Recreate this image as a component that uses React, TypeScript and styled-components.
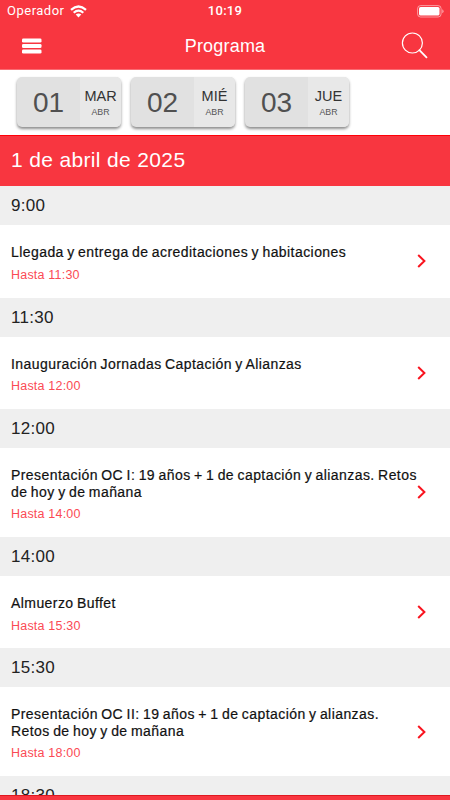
import React from 'react';
import styled, { createGlobalStyle } from 'styled-components';

const red = '#f83640';

const GlobalStyle = createGlobalStyle`
  * { box-sizing: border-box; }
  body { margin: 0; background: #fff; overflow: hidden; font-family: "Liberation Sans", Arial, sans-serif; }
`;

const Screen = styled.div`
  width: 450px;
  height: 800px;
  overflow: hidden;
  display: flex;
  flex-direction: column;
  background: #fff;
`;

const Header = styled.header`
  flex: none;
  height: 70px;
  background: ${red};
  border-bottom: 1px solid #f96b72;
  color: #fff;
`;

const StatusBar = styled.div`
  height: 22px;
  display: grid;
  grid-template-columns: 1fr auto 1fr;
  align-items: center;
  padding: 0 6px 0 7px;
`;

const Carrier = styled.div`
  display: flex;
  align-items: center;
  gap: 5px;
  font: 13px/22px Roboto, sans-serif;
  letter-spacing: 0.5px;
`;

const Clock = styled.div`
  font: 500 13px/22px Roboto, sans-serif;
  letter-spacing: 0.3px;
  margin-right: 1px;
`;

const Battery = styled.svg`
  justify-self: end;
`;

const NavBar = styled.div`
  height: 47px;
  display: grid;
  grid-template-columns: 1fr auto 1fr;
  align-items: center;
  padding: 0 22px;
`;

const IconButton = styled.button<{ $end?: boolean }>`
  border: 0;
  padding: 0;
  background: none;
  color: #fff;
  display: flex;
  justify-self: ${p => (p.$end ? 'end' : 'start')};
`;

const Title = styled.h1`
  margin: 0;
  font-size: 18px;
  line-height: 24px;
  font-weight: 400;
  letter-spacing: 0.2px;
`;

const Days = styled.nav`
  flex: none;
  height: 65px;
  display: flex;
  gap: 10px;
  padding: 7px 17px;
`;

const DayCard = styled.button`
  width: 104px;
  height: 50px;
  display: flex;
  padding: 0;
  border: 0;
  border-radius: 5px;
  overflow: hidden;
  background: #e1e1e1;
  box-shadow: 0 2px 3px rgba(0, 0, 0, 0.45);
  font-family: inherit;
`;

const DayNumber = styled.span`
  width: 63px;
  font-size: 28px;
  line-height: 52px;
  color: #505050;
  text-align: center;
`;

const DayLabel = styled.span`
  width: 41px;
  height: 50px;
  padding-top: 10px;
  background: #e8e8e8;
  display: flex;
  flex-direction: column;
  align-items: center;
`;

const Weekday = styled.span`
  font-size: 14.5px;
  line-height: 18px;
  color: #333;
`;

const Month = styled.span`
  font-size: 8.8px;
  line-height: 14px;
  color: #555;
`;

const DateBar = styled.h2`
  flex: none;
  margin: 0;
  height: 51px;
  padding-left: 11px;
  background: ${red};
  border-top: 1px solid #ff0008;
  color: #fff;
  font-size: 21px;
  line-height: 48px;
  font-weight: 400;
  letter-spacing: 0.35px;
`;

const Agenda = styled.main`
  flex: 1;
  min-height: 0;
  padding-top: 0.4px;
  overflow: hidden;
`;

const Hour = styled.h3`
  margin: 0;
  height: 39px;
  padding-left: 11px;
  background: #efefef;
  color: #222;
  font-size: 17px;
  line-height: 39px;
  font-weight: 400;
  letter-spacing: 0.3px;
`;

const Event = styled.article`
  display: flex;
  align-items: center;
  justify-content: space-between;
  padding: 19px 22px 14.65px 11px;
`;

const EventTitle = styled.div`
  font-size: 14px;
  line-height: 16.5px;
  letter-spacing: 0.43px;
  word-spacing: -0.9px;
  color: #111;
  -webkit-text-stroke: 0.2px #111;
  white-space: pre;
`;

const Until = styled.div`
  margin-top: 6.2px;
  font-size: 12.5px;
  line-height: 16px;
  letter-spacing: 0.2px;
  color: #fb4a54;
`;

const Arrow = styled.svg`
  flex: none;
  margin: -4.5px 0 0 -20px;
`;

const BottomBar = styled.footer`
  flex: none;
  height: 5px;
  background: ${red};
  border-top: 1px solid #e01820;
`;

const days = [
  { number: '01', weekday: 'MAR' },
  { number: '02', weekday: 'MIÉ' },
  { number: '03', weekday: 'JUE' },
];

const sessions = [
  { start: '9:00', title: 'Llegada y entrega de acreditaciones y habitaciones', end: '11:30' },
  { start: '11:30', title: 'Inauguración Jornadas Captación y Alianzas', end: '12:00' },
  { start: '12:00', title: 'Presentación OC I: 19 años + 1 de captación y alianzas. Retos\nde hoy y de mañana', end: '14:00' },
  { start: '14:00', title: 'Almuerzo Buffet', end: '15:30' },
  { start: '15:30', title: 'Presentación OC II: 19 años + 1 de captación y alianzas.\nRetos de hoy y de mañana', end: '18:00' },
];

export default function App() {
  return (
    <Screen>
      <GlobalStyle />
      <Header>
        <StatusBar>
          <Carrier>
            Operador
            <svg width="17" height="13" viewBox="0 0 17 13" fill="none" stroke="#fff" strokeWidth="2.2">
              <path d="M1 4.8Q8.5 -1.8 16 4.8M3.7 7.7Q8.5 3.4 13.3 7.7" />
              <path d="M5.7 9.6Q8.5 7.2 11.3 9.6L8.5 12.6Z" fill="#fff" stroke="none" />
            </svg>
          </Carrier>
          <Clock>10:19</Clock>
          <Battery width="27" height="13" viewBox="0 0 27 13">
            <rect x="0.6" y="0.6" width="23.5" height="11.4" rx="3" fill="none" stroke="#fff" strokeOpacity=".5" />
            <rect x="2" y="2" width="20.5" height="8.6" rx="1.6" fill="#fff" />
            <path d="M25.2 4.3Q26.6 5 26.6 6.3T25.2 8.3Z" fill="#fff" fillOpacity=".5" />
          </Battery>
        </StatusBar>
        <NavBar>
          <IconButton aria-label="Menú">
            <svg width="20" height="16" viewBox="0 0 20 16" fill="#fff">
              <rect y="0.5" width="19.5" height="4" rx="1.3" />
              <rect y="6" width="19.5" height="4" rx="1.3" />
              <rect y="11.5" width="19.5" height="4" rx="1.3" />
            </svg>
          </IconButton>
          <Title>Programa</Title>
          <IconButton $end aria-label="Buscar">
            <svg width="27" height="27" viewBox="0 0 27 27" fill="none" stroke="#fff">
              <circle cx="11.4" cy="11" r="10" strokeWidth="1.2" />
              <path d="M18.4 18.2L25.5 25.3" strokeWidth="1.8" strokeLinecap="round" />
            </svg>
          </IconButton>
        </NavBar>
      </Header>
      <Days>
        {days.map(d => (
          <DayCard key={d.number}>
            <DayNumber>{d.number}</DayNumber>
            <DayLabel>
              <Weekday>{d.weekday}</Weekday>
              <Month>ABR</Month>
            </DayLabel>
          </DayCard>
        ))}
      </Days>
      <DateBar>1 de abril de 2025</DateBar>
      <Agenda>
        {sessions.map(s => (
          <React.Fragment key={s.start}>
            <Hour>{s.start}</Hour>
            <Event>
              <div>
                <EventTitle>{s.title}</EventTitle>
                <Until>Hasta {s.end}</Until>
              </div>
              <Arrow width="12" height="14" viewBox="0 0 12 14" fill="none" stroke="#f9141f" strokeWidth="2">
                <path d="M2.2 1L8.4 7L2.2 13" />
              </Arrow>
            </Event>
          </React.Fragment>
        ))}
        <Hour>18:30</Hour>
      </Agenda>
      <BottomBar />
    </Screen>
  );
}
